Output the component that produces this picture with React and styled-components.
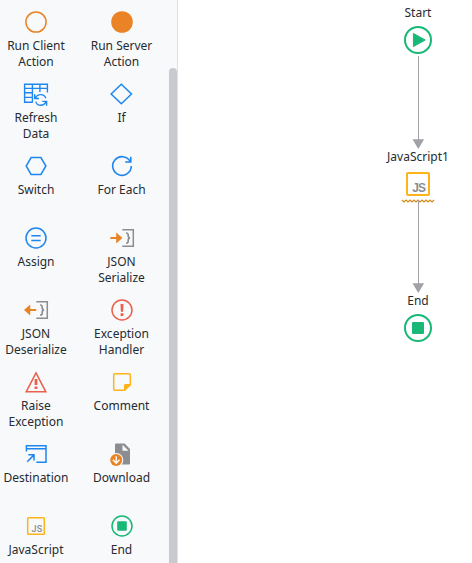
import React from "react";
import styled, { createGlobalStyle } from "styled-components";

const GlobalStyle = createGlobalStyle`
  * { box-sizing: border-box; }
  body {
    margin: 0;
    background: #fff;
    font-family: "Noto Sans", "Open Sans", sans-serif;
    font-size: 12px;
    line-height: 16px;
    color: #272b30;
  }
`;

const BLUE = "#1f86ef";
const ORANGE = "#e98325";
const RED = "#ec5f4b";
const GREEN = "#18b877";
const YELLOW = "#ffb31a";
const GREY = "#8b8d90";

const Editor = styled.div`
  display: flex;
  height: 563px;
  overflow: hidden;
`;

const Toolbox = styled.aside`
  flex: none;
  display: flex;
  width: 178px;
  background: #f7f9fb;
  border-right: 1px solid #dee1e5;
`;

const ToolGrid = styled.div`
  flex: none;
  width: 169px;
  display: grid;
  grid-template-columns: 72px 71px;
  grid-auto-rows: 72px;
  column-gap: 14px;
`;

const Tool = styled.div`
  display: flex;
  flex-direction: column;
  align-items: center;
  padding-top: 9px;
`;

const ToolIcon = styled.svg`
  flex: none;
  width: 26px;
  height: 26px;
  margin-bottom: 3px;
  margin-right: ${(p) => (p.$right ? -1 : 0)}px;
`;

const Label = styled.span`
  display: block;
  text-align: center;
  white-space: pre;
`;

const ScrollTrack = styled.div`
  flex: none;
  width: 8px;
  padding-top: 68px;
`;

const ScrollThumb = styled.div`
  height: 520px;
  border-radius: 4px;
  background: #c9cacf;
`;

const Canvas = styled.main`
  flex: 1;
  display: flex;
  justify-content: flex-end;
`;

const Flow = styled.div`
  width: 108px;
  display: flex;
  flex-direction: column;
  align-items: center;
  padding-top: 5px;
`;

const NodeIcon = styled.svg`
  flex: none;
  width: 34px;
  height: 34px;
  margin-top: 2px;
  overflow: visible;
`;

const Connector = styled.svg`
  flex: none;
  width: 14px;
  height: 92px;
  overflow: visible;
`;

function TableRefresh() {
  return (
    <g fill="none" stroke={BLUE} strokeWidth="1.4">
      <path d="M-3.6 8.2H-11.4V-9.8H11.4V-1.6M-11.4 -5.6H11.4M-11.4 -1.3H-3.6M-11.4 3.4H-3.6M-3.6 -9.8V8.8M3.9 -9.8V-2" />
      <path d="M9.8 4.3C9 1.9 7.1 .6 4.7 .6C2.2 .6 .3 2 -.7 4.3M-1.3 .3V4.5H3M-.3 7.6C.5 10 2.3 11.3 4.7 11.3C7.2 11.3 9 9.9 10 7.6M6.3 7.4H10.6V11.8" />
    </g>
  );
}

function Brackets({ into }) {
  return (
    <g>
      <path
        d={into ? "M-11.7 -1.1H-5.8V-5.5L.4 0L-5.8 5.5V1.1H-11.7Z" : "M.2 -1.1H-5.8V-5.5L-12 0L-5.8 5.5V1.1H.2Z"}
        fill={ORANGE}
      />
      <path d="M.3 -8.3H11.3V8.3H.3" fill="none" stroke={GREY} strokeWidth="1.5" />
      <path d="M4 -5C6 -5 6.2 -4.4 6.2 -2.5C6.2 -.9 6.6 0 8.1 0C6.6 0 6.2 .9 6.2 2.5C6.2 4.4 6 5 4 5" fill="none" stroke={GREY} strokeWidth="1.7" />
    </g>
  );
}

const JsText = styled.text`
  font-family: ${(p) => (p.$small ? "Roboto" : '"Liberation Sans", Arial')}, sans-serif;
  font-size: ${(p) => (p.$small ? 9 : 12)}px;
  font-weight: ${(p) => (p.$small ? 500 : 700)};
  fill: ${GREY};
`;

const tools = [
  ["Run Client\nAction", <circle r="10.1" fill="none" stroke={ORANGE} strokeWidth="1.5" />],
  ["Run Server\nAction", <circle r="10.8" fill={ORANGE} />],
  ["Refresh\nData", <TableRefresh />],
  ["If", <path d="M-.7 -9.8L9.5 0L-.7 9.8L-10.9 0Z" fill="none" stroke={BLUE} strokeWidth="1.5" />],
  ["Switch", <path d="M-4.9 -8.4H4.9L9.9 0L4.9 8.4H-4.9L-9.8 0Z" fill="none" stroke={BLUE} strokeWidth="1.5" />],
  ["For Each", <path d="M8.1 -4.6A9.3 9.3 0 1 0 9.3 0M3.2 -4H8.8V-9.2" fill="none" stroke={BLUE} strokeWidth="1.6" />],
  ["Assign", <g fill="none" stroke={BLUE} strokeWidth="1.5"><circle r="10" /><path d="M-4.7 -2.3H4.7M-4.7 2.4H4.7" /></g>],
  ["JSON\nSerialize", <Brackets into />],
  ["JSON\nDeserialize", <Brackets />],
  ["Exception\nHandler", <g><circle r="10" fill="none" stroke={RED} strokeWidth="1.5" /><path d="M-1.5 -6H1.5L1.1 1.8H-1.1ZM-1.4 3.2H1.4V5.9H-1.4Z" fill={RED} /></g>],
  ["Raise\nException", <g><path d="M0 -9.2L9.8 9.8H-9.8Z" fill="none" stroke={RED} strokeWidth="1.5" /><path d="M-1.4 -3H1.4V3H-1.4ZM-1.4 4.4H1.4V7H-1.4Z" fill={RED} /></g>],
  ["Comment", <g><path d="M2.5 8.3H-7.2Q-8.3 8.3 -8.3 7.2V-7.2Q-8.3 -8.3 -7.2 -8.3H7.2Q8.3 -8.3 8.3 -7.2V3" fill="none" stroke={YELLOW} strokeWidth="1.5" /><path d="M2 9V3.2Q2 2 3.2 2H9L8.9 3.2L3 9Z" fill={YELLOW} /></g>],
  ["Destination", <g fill="none" stroke={BLUE} strokeWidth="1.5"><path d="M-9.6 -2.5V-8.3H10V8.3H.3M-9.6 -5.3H10M-8.8 7.8L-2.2 1.1M-7.7 .7H-2V6.6" /></g>],
  ["Download", <g>
    <path d="M-7 -9.5Q-7 -10.5 -6 -10.5H2.6L8 -5V9.5Q8 10.5 7 10.5H-7Z" fill={GREY} />
    <path d="M.5 -9.2V-3.2H6.5Z" fill="#f7f9fb" />
    <circle cx="-5.8" cy="6" r="7.1" fill="#f7f9fb" />
    <circle cx="-5.8" cy="6" r="6" fill={ORANGE} />
    <path d="M-5.8 2.2V9M-9.1 5.8L-5.8 9.2L-2.5 5.8" fill="none" stroke="#fff" strokeWidth="1.4" />
  </g>],
  ["JavaScript", <g>
    <rect x="-8.3" y="-8.3" width="16.6" height="16.6" rx=".8" fill="none" stroke={YELLOW} strokeWidth="1.5" />
    <JsText x="-4.6" y="5.8" textLength="10.8" $small>JS</JsText>
  </g>],
  ["End", <g><circle r="10" fill="none" stroke={GREEN} strokeWidth="1.5" /><rect x="-4.8" y="-4.8" width="9.6" height="9.6" rx="1" fill={GREEN} /></g>],
];

function Arrow() {
  return (
    <Connector viewBox="0 0 14 92">
      <path d="M7.5 -1V83" stroke="#a1a2a7" />
      <path d="M1.5 82.2H13.1L7.3 92Z" fill="#a1a2a7" />
    </Connector>
  );
}

const Step = styled.div`
  display: flex;
  flex-direction: column;
  align-items: center;
  height: 52px;
`;

function FlowNode({ label, children }) {
  return (
    <Step>
      <Label>{label}</Label>
      <NodeIcon viewBox="-17 -17 34 34">{children}</NodeIcon>
    </Step>
  );
}

export default function App() {
  return (
    <>
      <GlobalStyle />
      <Editor>
        <Toolbox>
          <ToolGrid>
            {tools.map(([label, icon], i) => (
              <Tool key={label}>
                <ToolIcon viewBox="-13 -13 26 26" $right={i % 2 === 1}>{icon}</ToolIcon>
                <Label>{label}</Label>
              </Tool>
            ))}
          </ToolGrid>
          <ScrollTrack>
            <ScrollThumb />
          </ScrollTrack>
        </Toolbox>
        <Canvas>
          <Flow>
            <FlowNode label="Start">
              <circle r="13" fill="none" stroke={GREEN} strokeWidth="2" />
              <path d="M-4.6 -6.6L7.2 0L-4.6 6.6Z" fill={GREEN} stroke={GREEN} strokeWidth="1" strokeLinejoin="round" />
            </FlowNode>
            <Arrow />
            <FlowNode label="JavaScript1">
              <rect x="-11" y="-11" width="22" height="22" rx="1" fill="none" stroke={YELLOW} strokeWidth="2" />
              <JsText x="-5.7" y="7.8" textLength="13.8">JS</JsText>
              <path d="M-16 16L-14 18L-12 16L-10 18L-8 16L-6 18L-4 16L-2 18L0 16L2 18L4 16L6 18L8 16L10 18L12 16L14 18L16 16" fill="none" stroke="#d48a1c" strokeWidth="1.2" />
            </FlowNode>
            <Arrow />
            <FlowNode label="End">
              <circle r="13" fill="none" stroke={GREEN} strokeWidth="2" />
              <rect x="-6" y="-6" width="12" height="12" rx="1.3" fill={GREEN} />
            </FlowNode>
          </Flow>
        </Canvas>
      </Editor>
    </>
  );
}
